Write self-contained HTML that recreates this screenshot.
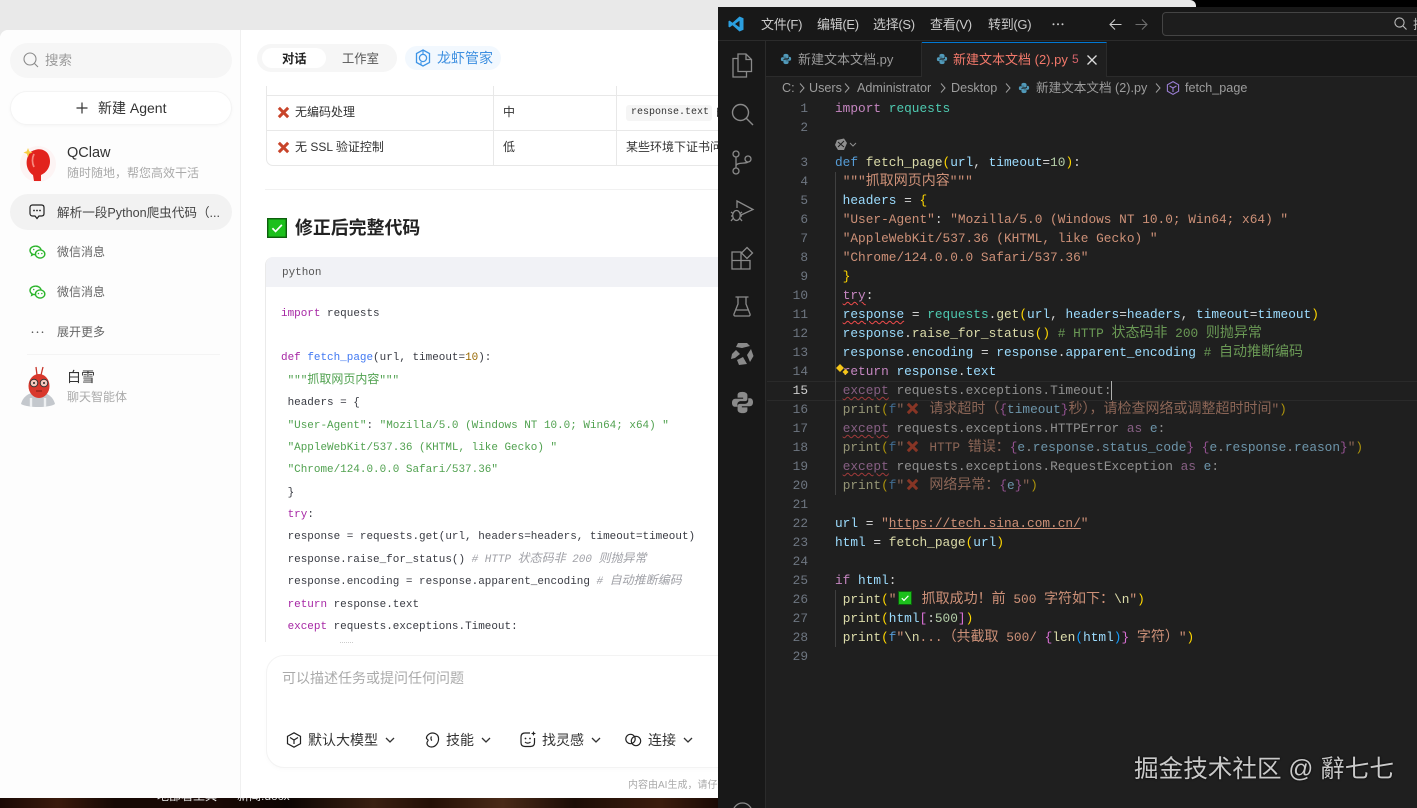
<!DOCTYPE html>
<html lang="zh"><head><meta charset="utf-8"><title>QClaw</title>
<style>
*{box-sizing:border-box;margin:0;padding:0}
html,body{width:1417px;height:808px;overflow:hidden;background:#000}
body{position:relative;font-family:"Liberation Sans","Noto Sans CJK SC",sans-serif}
.a{position:absolute;white-space:pre}
svg{position:absolute;overflow:visible}
i{font-style:normal}
.l{position:absolute;white-space:pre;height:19px;line-height:19px}
#ed .l{left:835px;font:12.8px/19px "Liberation Mono","Noto Sans CJK SC",monospace;color:#9cdcfe}
#ed i.c{font-size:14px;line-height:0;font-family:"Noto Sans CJK SC",sans-serif}
#ed .n{position:absolute;left:780px;width:28px;text-align:right;font:12.8px/19px "Liberation Mono",monospace;color:#6e7681}
.k{color:#c586c0}.t{color:#4ec9b0}.d{color:#569cd6}.f{color:#dcdcaa}.w{color:#d4d4d4}.s{color:#ce9178}.m{color:#b5cea8}.g{color:#6a9955}.y{color:#ffd700}.p{color:#da70d6}.b{color:#179fff}
.sq{text-decoration:underline wavy #f14c4c 1px;text-underline-offset:2px}
.dim{opacity:.62}
.dim .t{color:#d4d4d4}
#cd{position:absolute;left:0;top:1px}
#cd .l{left:281px;font:10.96px/22px "Liberation Mono","Noto Sans CJK SC",monospace;color:#383a42;height:22px}
#cd i.c{font-size:12px;line-height:0;font-family:"Noto Sans CJK SC",sans-serif}
.K{color:#a626a4}.F{color:#4078f2}.S{color:#50a14f}.N{color:#986801}.C,.C i{color:#a0a1a7;font-style:italic}
.e{display:inline-block;width:17.5px;height:12px;position:relative;vertical-align:-1px}
</style></head><body>
<svg width="0" height="0" style="position:absolute"><defs>
<symbol id="x" viewBox="0 0 14 14"><path d="M2 2L12 12M12 2L2 12" stroke="#c8442a" stroke-width="3.2" stroke-linecap="butt"/></symbol>
<symbol id="ok" viewBox="0 0 14 14"><rect x=".5" y=".5" width="13" height="13" fill="#1cc01c" stroke="#0d5f0d"/><path d="M3.8 7.2L6 9.4L10.4 4.8" stroke="#fff" stroke-width="1.2" fill="none"/></symbol>
<symbol id="py" viewBox="0 0 14 14"><path d="M7 1C4.5 1 4 2 4 3V4.5H7.3V5H2.6C1.5 5 1 6 1 7.3S1.6 9.5 2.6 9.5H4V8C4 7 5 6.3 6 6.3H8.6C9.4 6.3 10 5.7 10 5V3C10 1.8 8.8 1 7 1Z" fill="#519aba"/><path d="M7 13C9.5 13 10 12 10 11V9.5H6.7V9H11.4C12.5 9 13 8 13 6.7S12.4 4.5 11.4 4.5H10.5V6C10.5 7 9.5 7.7 8.5 7.7H5.6C4.8 7.7 4 8.3 4 9V11C4 12.2 5.2 13 7 13Z" fill="#519aba"/></symbol>
<symbol id="wx" viewBox="0 0 18 16"><path d="M7 1.2C3.7 1.2 1 3.2 1 5.8c0 1.5.9 2.7 2.2 3.6L2.8 11l1.9-1c.6.2 1.3.3 2 .3" fill="none" stroke="#2bb52b" stroke-width="1.5"/><path d="M12.9 5.3C12.4 3 10 1.2 7 1.2" fill="none" stroke="#2bb52b" stroke-width="1.5"/><ellipse cx="11.8" cy="9.6" rx="5" ry="4.3" fill="none" stroke="#2bb52b" stroke-width="1.5"/><circle cx="10" cy="9" r=".8" fill="#2bb52b"/><circle cx="13.6" cy="9" r=".8" fill="#2bb52b"/><circle cx="5" cy="4.8" r=".8" fill="#2bb52b"/></symbol>
<symbol id="chev" viewBox="0 0 10 6"><path d="M1 1L5 5L9 1" fill="none" stroke="#333" stroke-width="1.3"/></symbol>
</defs></svg>

<!-- backdrop -->
<div class="a" style="left:0;top:0;width:1196px;height:30px;background:#e9e9e9;border-top-right-radius:6px"></div>
<div class="a" style="left:0;top:30px;width:760px;height:778px;background:#e9e9e9"></div>
<div class="a" style="left:0;top:798px;width:718px;height:10px;background:linear-gradient(90deg,#1a0a06,#3a1a0c 8%,#160804 16%,#1a0905 30%,#0c0503 40%,#3a2012 52%,#241006 60%,#4a2a18 70%,#1c0d06 80%,#3b1c0d 92%,#1a0a05)"></div>
<div class="a" style="left:157px;top:789px;font-size:12px;line-height:15px;color:#eee">地部署工具</div>
<div class="a" style="left:237px;top:789px;font-size:12px;line-height:15px;color:#ddd">新闻.docx</div>

<!-- app window -->
<div class="a" style="left:0;top:30px;width:730px;height:768px;background:#fff;border-top-left-radius:8px;overflow:hidden"></div>
<div class="a" style="left:0;top:30px;width:241px;height:768px;background:#fdfdfd;border-right:1px solid #f0f0f0;border-top-left-radius:8px"></div>

<!-- sidebar -->
<div class="a" style="left:10px;top:43px;width:222px;height:35px;border-radius:18px;background:#f6f6f6"></div>
<svg style="left:23px;top:52px" width="16" height="16" viewBox="0 0 16 16"><circle cx="7" cy="7" r="6" fill="none" stroke="#8a8a8a" stroke-width="1.1"/><path d="M11.5 11.5L15 15" stroke="#8a8a8a" stroke-width="1.1"/></svg>
<div class="a" style="left:45px;top:51px;font-size:13.5px;line-height:20px;color:#9a9a9a">搜索</div>
<div class="a" style="left:10px;top:91px;width:222px;height:34px;border-radius:17px;background:#fff;border:1px solid #f4f4f4;box-shadow:0 1px 3px rgba(0,0,0,.03)"></div>
<svg style="left:76px;top:102px" width="12" height="12" viewBox="0 0 12 12"><path d="M6 .5V11.5M.5 6H11.5" stroke="#333" stroke-width="1.2"/></svg>
<div class="a" style="left:98px;top:98px;font-size:14px;line-height:20px;color:#333">新建 Agent</div>

<svg style="left:20px;top:142px" width="36" height="44" viewBox="0 0 36 44"><circle cx="18" cy="22" r="18" fill="#fdeeee" opacity=".6"/><path d="M8 14C5 21 7 29 13 33L14 39H21L21 33C28 30 32 22 29 14C27 8 20 6 15 8C11 9 9 11 8 14Z" fill="#e2231d"/><path d="M14 12C12 16 12 21 14 25" stroke="#f58a80" stroke-width="1.8" fill="none"/><path d="M8 6L9.2 9.3L12.5 10.5L9.2 11.7L8 15L6.8 11.7L3.5 10.5L6.8 9.3Z" fill="#f6cf45"/></svg>
<div class="a" style="left:67px;top:143px;font-size:14.5px;line-height:20px;color:#333">QClaw</div>
<div class="a" style="left:67px;top:165px;font-size:12px;line-height:17px;color:#aaa">随时随地，帮您高效干活</div>

<div class="a" style="left:10px;top:194px;width:222px;height:36px;border-radius:18px;background:#f2f2f2"></div>
<svg style="left:29px;top:204px" width="16" height="16" viewBox="0 0 16 16"><path d="M3.5 1H12.5C14 1 15 2 15 3.5V9.5C15 11 14 12 12.5 12H10L8 14.5L6 12H3.5C2 12 1 11 1 9.5V3.5C1 2 2 1 3.5 1Z" fill="none" stroke="#222" stroke-width="1.2"/><circle cx="5" cy="6.5" r=".9" fill="#222"/><circle cx="8" cy="6.5" r=".9" fill="#222"/><circle cx="11" cy="6.5" r=".9" fill="#222"/></svg>
<div class="a" style="left:57px;top:204px;font-size:12.6px;line-height:18px;color:#444">解析一段Python爬虫代码（...</div>

<svg style="left:29px;top:245px" width="17" height="15"><use href="#wx"/></svg>
<div class="a" style="left:57px;top:244px;font-size:12px;line-height:17px;color:#666">微信消息</div>
<svg style="left:29px;top:285px" width="17" height="15"><use href="#wx"/></svg>
<div class="a" style="left:57px;top:284px;font-size:12px;line-height:17px;color:#666">微信消息</div>
<svg style="left:31px;top:331px" width="13" height="3"><circle cx="1.5" cy="1.2" r=".8" fill="#555"/><circle cx="6.5" cy="1.2" r=".8" fill="#555"/><circle cx="11.5" cy="1.2" r=".8" fill="#555"/></svg>
<div class="a" style="left:57px;top:324px;font-size:12px;line-height:17px;color:#666">展开更多</div>
<div class="a" style="left:27px;top:354px;width:193px;height:1px;background:#f4f4f4"></div>

<svg style="left:20px;top:366px" width="36" height="42" viewBox="0 0 36 42"><path d="M1 38C3 30 10 26 18 26S33 30 35 38C29 42 8 42 1 38Z" fill="#c4c8cd"/><path d="M11 32V41M25 32V41" stroke="#eef0f2" stroke-width="2.4"/><ellipse cx="19" cy="20" rx="10.5" ry="12" fill="#d9382c"/><path d="M17 9L16 1M21 9L23 1" stroke="#c8352a" stroke-width="1.3"/><circle cx="14" cy="17" r="3.8" fill="#f3c9bc" stroke="#333"/><circle cx="24" cy="17" r="3.8" fill="#f3c9bc" stroke="#333"/><circle cx="14" cy="17" r="1" fill="#222"/><circle cx="24" cy="17" r="1" fill="#222"/><path d="M16 25H22" stroke="#7a1c14"/></svg>
<div class="a" style="left:67px;top:367px;font-size:14px;line-height:20px;color:#333">白雪</div>
<div class="a" style="left:67px;top:389px;font-size:12px;line-height:17px;color:#aaa">聊天智能体</div>

<!-- tabs -->
<div class="a" style="left:257px;top:44px;width:140px;height:28px;border-radius:14px;background:#f6f6f6"></div>
<div class="a" style="left:262px;top:48px;width:64px;height:20px;border-radius:10px;background:#fff"></div>
<div class="a" style="left:282px;top:50px;font-size:12.3px;line-height:18px;font-weight:700;color:#222">对话</div>
<div class="a" style="left:342px;top:50px;font-size:12.3px;line-height:18px;color:#555">工作室</div>
<div class="a" style="left:405px;top:46px;width:96px;height:24px;border-radius:12px;background:#f2f8fe"></div>
<svg style="left:414px;top:49px" width="18" height="18" viewBox="0 0 18 18"><path d="M9 1L15.5 4.5V13.5L9 17L2.5 13.5V4.5Z" fill="none" stroke="#3d94e6" stroke-width="1.3"/><circle cx="9" cy="9" r="3.6" fill="none" stroke="#3d94e6" stroke-width="1.3"/><path d="M9 5.4V1.5M7 13V16" stroke="#3d94e6" stroke-width="1.1"/></svg>
<div class="a" style="left:437px;top:48px;font-size:14px;line-height:20px;color:#3d8fe0">龙虾管家</div>

<!-- table -->
<div class="a" style="left:266px;top:86px;width:460px;height:80px;border:1px solid #e8e8e8;border-top:0;border-right:0;border-bottom-left-radius:7px"></div>
<div class="a" style="left:266px;top:95px;width:460px;height:1px;background:#e8e8e8"></div>
<div class="a" style="left:266px;top:130px;width:460px;height:1px;background:#e8e8e8"></div>
<div class="a" style="left:493px;top:86px;width:1px;height:80px;background:#e8e8e8"></div>
<div class="a" style="left:616px;top:86px;width:1px;height:80px;background:#e8e8e8"></div>
<svg style="left:277px;top:106px" width="13" height="13"><use href="#x"/></svg>
<div class="a" style="left:295px;top:104px;font-size:12px;line-height:17px;color:#333">无编码处理</div>
<svg style="left:277px;top:141px" width="13" height="13"><use href="#x"/></svg>
<div class="a" style="left:295px;top:139px;font-size:12px;line-height:17px;color:#333">无 SSL 验证控制</div>
<div class="a" style="left:503px;top:104px;font-size:12px;line-height:17px;color:#333">中</div>
<div class="a" style="left:503px;top:139px;font-size:12px;line-height:17px;color:#333">低</div>
<div class="a" style="left:626px;top:105px;width:86px;height:16px;background:#f5f5f5;border-radius:3px"></div>
<div class="a" style="left:631px;top:105px;font:10px/16px 'Liberation Mono',monospace;color:#333">response.text</div>
<div class="a" style="left:716px;top:104px;font-size:12px;line-height:17px;color:#333">的</div>
<div class="a" style="left:626px;top:139px;font-size:12px;line-height:17px;color:#333">某些环境下证书问题</div>
<div class="a" style="left:265px;top:189px;width:460px;height:1px;background:#f1f1f1"></div>

<svg style="left:267px;top:218px" width="20" height="20"><use href="#ok"/></svg>
<div class="a" style="left:295px;top:216px;font-size:17.9px;line-height:24px;font-weight:700;color:#222">修正后完整代码</div>

<!-- code block -->
<div class="a" style="left:265px;top:257px;width:470px;height:385px;border-left:1px solid #eaeaea;border-top-left-radius:8px;overflow:hidden"><div style="height:30px;background:#f1f2f6"></div></div>
<div class="a" style="left:282px;top:265px;font:10.96px/16px 'Liberation Mono',monospace;color:#555">python</div>
<div id="cd">
<div class="l" style="top:302px"><i class="K">import</i> requests</div>
<div class="l" style="top:346px"><i class="K">def</i> <i class="F">fetch_page</i>(url, timeout=<i class="N">10</i>):</div>
<div class="l" style="top:369px"> <i class="S">"""<i class="c">抓取网页内容</i>"""</i></div>
<div class="l" style="top:391px"> headers = {</div>
<div class="l" style="top:414px"> <i class="S">"User-Agent"</i>: <i class="S">"Mozilla/5.0 (Windows NT 10.0; Win64; x64) "</i></div>
<div class="l" style="top:436px"> <i class="S">"AppleWebKit/537.36 (KHTML, like Gecko) "</i></div>
<div class="l" style="top:458px"> <i class="S">"Chrome/124.0.0.0 Safari/537.36"</i></div>
<div class="l" style="top:481px"> }</div>
<div class="l" style="top:503px"> <i class="K">try</i>:</div>
<div class="l" style="top:525px"> response = requests.get(url, headers=headers, timeout=timeout)</div>
<div class="l" style="top:548px"> response.raise_for_status() <i class="C"># HTTP <i class="c">状态码非</i> 200 <i class="c">则抛异常</i></i></div>
<div class="l" style="top:570px"> response.encoding = response.apparent_encoding <i class="C"># <i class="c">自动推断编码</i></i></div>
<div class="l" style="top:593px"> <i class="K">return</i> response.text</div>
<div class="l" style="top:615px"> <i class="K">except</i> requests.exceptions.Timeout:</div>
</div>
<div class="a" style="left:340px;top:642px;width:13px;height:2px;border-top:1px dotted #ccc"></div>

<!-- input -->
<div class="a" style="left:266px;top:655px;width:470px;height:113px;border:1px solid #f3f3f3;border-radius:18px;background:#fff;box-shadow:0 2px 5px rgba(0,0,0,.02)"></div>
<div class="a" style="left:282px;top:668px;font-size:14px;line-height:20px;color:#aaa">可以描述任务或提问任何问题</div>
<svg style="left:286px;top:732px" width="16" height="16" viewBox="0 0 16 16"><path d="M8 .8L14.5 4.4V11.6L8 15.2L1.5 11.6V4.4Z" fill="none" stroke="#222" stroke-width="1.2"/><path d="M4 5.5L8 8L12 5.5M8 8V12" fill="none" stroke="#222" stroke-width="1.2"/></svg>
<div class="a" style="left:308px;top:730px;font-size:14px;line-height:20px;color:#333">默认大模型</div>
<svg style="left:385px;top:737px" width="10" height="6"><use href="#chev"/></svg>
<svg style="left:425px;top:732px" width="15" height="16" viewBox="0 0 15 16"><path d="M5 1.5C8 .3 13 1.5 13.5 6C14 10 11 15 6.5 15C3 15 1 12 2.5 9.5C4 8 2.5 7.5 1.5 6.5C1 4.5 3 2.5 5 1.5Z" fill="none" stroke="#222" stroke-width="1.2"/><path d="M6.5 4.5C5.5 6 6 8 7 8.5" fill="none" stroke="#222" stroke-width="1.2"/></svg>
<div class="a" style="left:446px;top:730px;font-size:14px;line-height:20px;color:#333">技能</div>
<svg style="left:481px;top:737px" width="10" height="6"><use href="#chev"/></svg>
<svg style="left:520px;top:731px" width="16" height="17" viewBox="0 0 16 17"><path d="M10 2H5C2.5 2 1 3.5 1 6V11.5C1 14 2.5 15.5 5 15.5H10.5C13 15.5 14.5 14 14.5 11.5V7" fill="none" stroke="#222" stroke-width="1.2"/><circle cx="5.5" cy="7.5" r=".9" fill="#222"/><circle cx="10" cy="7.5" r=".9" fill="#222"/><path d="M5 11C6.5 12.5 9 12.5 10.5 11" fill="none" stroke="#222" stroke-width="1.2"/><path d="M13.5 0L14.2 1.8L16 2.5L14.2 3.2L13.5 5L12.8 3.2L11 2.5L12.8 1.8Z" fill="#222"/></svg>
<div class="a" style="left:542px;top:730px;font-size:14px;line-height:20px;color:#333">找灵感</div>
<svg style="left:591px;top:737px" width="10" height="6"><use href="#chev"/></svg>
<svg style="left:625px;top:733px" width="17" height="14" viewBox="0 0 17 14"><circle cx="5.5" cy="6" r="4.7" fill="none" stroke="#222" stroke-width="1.2"/><circle cx="11" cy="8" r="4.7" fill="none" stroke="#222" stroke-width="1.2"/></svg>
<div class="a" style="left:648px;top:730px;font-size:14px;line-height:20px;color:#333">连接</div>
<svg style="left:683px;top:737px" width="10" height="6"><use href="#chev"/></svg>
<div class="a" style="left:628px;top:779px;font-size:10px;line-height:14px;color:#aaa">内容由AI生成，请仔细甄别</div>

<!-- VS Code -->
<div class="a" style="left:718px;top:7px;width:699px;height:801px;background:#1f1f1f;overflow:hidden;z-index:1"></div>
<div style="position:absolute;left:0;top:0;width:1417px;height:808px;z-index:2;overflow:hidden">
<div class="a" style="left:718px;top:7px;width:699px;height:34px;background:#181818;border-bottom:1px solid #2b2b2b"></div>
<div class="a" style="left:718px;top:41px;width:48px;height:767px;background:#181818;border-right:1px solid #2b2b2b"></div>
<div class="a" style="left:766px;top:41px;width:651px;height:36px;background:#181818;border-bottom:1px solid #2b2b2b"></div>

<svg style="left:728px;top:16px" width="16" height="16" viewBox="0 0 16 16"><path d="M11.5 0.5L15.5 2.3V13.7L11.5 15.5L4.5 9.2L1.6 11.4L.5 10.8V5.2L1.6 4.6L4.5 6.8ZM11.5 4.8L7 8L11.5 11.2Z" fill="#2b9fe0" fill-rule="evenodd"/></svg>
<div class="a" style="left:761px;top:15px;font-size:13px;line-height:19px;color:#ccc;letter-spacing:-.3px">文件(F)</div>
<div class="a" style="left:817px;top:15px;font-size:13px;line-height:19px;color:#ccc;letter-spacing:-.3px">编辑(E)</div>
<div class="a" style="left:873px;top:15px;font-size:13px;line-height:19px;color:#ccc;letter-spacing:-.3px">选择(S)</div>
<div class="a" style="left:930px;top:15px;font-size:13px;line-height:19px;color:#ccc;letter-spacing:-.3px">查看(V)</div>
<div class="a" style="left:988px;top:15px;font-size:13px;line-height:19px;color:#ccc;letter-spacing:-.3px">转到(G)</div>
<svg style="left:1052px;top:23px" width="12" height="3"><circle cx="1.5" cy="1.2" r="1" fill="#ccc"/><circle cx="6" cy="1.2" r="1" fill="#ccc"/><circle cx="10.5" cy="1.2" r="1" fill="#ccc"/></svg>
<svg style="left:1109px;top:18px" width="13" height="13" viewBox="0 0 13 13"><path d="M12.5 6.5H1M6 1.5L1 6.5L6 11.5" fill="none" stroke="#ccc" stroke-width="1.1"/></svg>
<svg style="left:1135px;top:18px" width="13" height="13" viewBox="0 0 13 13"><path d="M.5 6.5H12M7 1.5L12 6.5L7 11.5" fill="none" stroke="#6e6e6e" stroke-width="1.1"/></svg>
<div class="a" style="left:1162px;top:12px;width:270px;height:24px;border:1px solid #444;border-radius:4px;background:#1d1d1d"></div>
<svg style="left:1394px;top:17px" width="13" height="13" viewBox="0 0 13 13"><circle cx="5.5" cy="5.5" r="4.6" fill="none" stroke="#bbb" stroke-width="1.1"/><path d="M9 9L12.5 12.5" stroke="#bbb" stroke-width="1.1"/></svg>
<div class="a" style="left:1413px;top:15px;font-size:13px;line-height:19px;color:#bbb">搜索</div>

<!-- activity -->
<svg style="left:731px;top:53px" width="22" height="25" viewBox="0 0 22 25" fill="none" stroke="#8a8a8a" stroke-width="1.3"><path d="M7 1H15L20.5 6.5V18.5H7Z"/><path d="M15 1V6.5H20.5"/><path d="M7 5.5H2V24H15.5V18.5"/></svg>
<svg style="left:731px;top:103px" width="23" height="23" viewBox="0 0 23 23" fill="none" stroke="#8a8a8a" stroke-width="1.4"><circle cx="9.5" cy="9.5" r="8"/><path d="M15 15L22 22"/></svg>
<svg style="left:732px;top:150px" width="20" height="25" viewBox="0 0 20 25" fill="none" stroke="#8a8a8a" stroke-width="1.3"><circle cx="4" cy="4" r="3"/><circle cx="4" cy="21" r="3"/><circle cx="16" cy="9" r="3"/><path d="M4 7V18M4 16C4 12 14 14 16 12"/></svg>
<svg style="left:730px;top:200px" width="24" height="23" viewBox="0 0 24 23" fill="none" stroke="#8a8a8a" stroke-width="1.3"><path d="M7 8V1L23 9.5L11 15"/><ellipse cx="6.5" cy="15.5" rx="3.8" ry="5"/><path d="M1 12L3 13.5M1 16H3M1 21L3 18.5M12 12L10 13.5M12 16H10M12 21L10 18.5"/></svg>
<svg style="left:731px;top:247px" width="22" height="23" viewBox="0 0 22 23" fill="none" stroke="#8a8a8a" stroke-width="1.3"><path d="M1 5H10V22H1ZM1 13.5H19V22H10"/><path d="M16 .5L21.5 6L16 11.5L10.5 6Z"/></svg>
<svg style="left:733px;top:296px" width="18" height="21" viewBox="0 0 18 21" fill="none" stroke="#8a8a8a" stroke-width="1.3"><path d="M2.5 1H15.5M5 1V8L1 18C.6 19 1.2 20 2.2 20H15.8C16.8 20 17.4 19 17 18L13 8V1M3 14H15"/></svg>
<svg style="left:730px;top:342px" width="24" height="24" viewBox="0 0 24 24" fill="#8a8a8a"><path d="M8 1H17L20 4L12 6L6 5ZM21 7L23.5 14L20 20L17 13ZM6 8L2 12L1 17L5 16L10 12ZM7 18L13 15L17 22L9 23Z"/></svg>
<svg style="left:731px;top:391px" width="23" height="23" viewBox="0 0 14 14" fill="#8a8a8a"><path d="M7 .5C4.5 .5 4 1.5 4 2.5V4H7.4V4.7H2.6C1.4 4.7.6 5.6.6 7.2S1.4 9.6 2.6 9.6H3.9V8C3.9 7 4.9 6.2 5.9 6.2H8.6C9.5 6.2 10 5.6 10 4.8V2.5C10 1.4 8.8.5 7 .5Z"/><path d="M7 13.5C9.5 13.5 10 12.5 10 11.5V10H6.6V9.3H11.4C12.6 9.3 13.4 8.4 13.4 6.8S12.6 4.4 11.4 4.4H10.5V6C10.5 7 9.5 7.8 8.5 7.8H5.5C4.6 7.8 4 8.4 4 9.2V11.5C4 12.6 5.2 13.5 7 13.5Z"/></svg>
<svg style="left:732px;top:802px" width="21" height="21" viewBox="0 0 21 21" fill="none" stroke="#8a8a8a" stroke-width="1.3"><circle cx="10.5" cy="10.5" r="9.5"/></svg>

<!-- editor tabs -->
<div class="a" style="left:766px;top:42px;width:156px;height:34px;background:#181818;border-right:1px solid #2b2b2b"></div>
<svg style="left:780px;top:53px" width="12" height="12"><use href="#py"/></svg>
<div class="a" style="left:798px;top:50px;font-size:13px;line-height:19px;color:#9a9a9a">新建文本文档.py</div>
<div class="a" style="left:922px;top:42px;width:185px;height:35px;background:#1f1f1f;border-top:1px solid #0078d4;border-right:1px solid #2b2b2b"></div>
<svg style="left:936px;top:53px" width="12" height="12"><use href="#py"/></svg>
<div class="a" style="left:953px;top:50px;font-size:13px;line-height:19px;color:#f2786a">新建文本文档 (2).py</div>
<div class="a" style="left:1072px;top:50px;font-size:12px;line-height:19px;color:#d4636a">5</div>
<svg style="left:1087px;top:55px" width="10" height="10" viewBox="0 0 10 10"><path d="M.5 .5L9.5 9.5M9.5 .5L.5 9.5" stroke="#ddd" stroke-width="1.3"/></svg>

<!-- breadcrumb -->
<div class="a" style="left:782px;top:79px;font-size:12.6px;line-height:18px;color:#9d9d9d">C:</div>
<div class="a" style="left:809px;top:79px;font-size:12.6px;line-height:18px;color:#9d9d9d">Users</div>
<div class="a" style="left:857px;top:79px;font-size:12.6px;line-height:18px;color:#9d9d9d">Administrator</div>
<div class="a" style="left:951px;top:79px;font-size:12.6px;line-height:18px;color:#9d9d9d">Desktop</div>
<svg style="left:1018px;top:82px" width="12" height="12"><use href="#py"/></svg>
<div class="a" style="left:1036px;top:79px;font-size:12.6px;line-height:18px;color:#9d9d9d">新建文本文档 (2).py</div>
<svg style="left:799px;top:83px" width="6" height="10" viewBox="0 0 6 10"><path d="M1 .5L5 5L1 9.5" fill="none" stroke="#9d9d9d"/></svg>
<svg style="left:844px;top:83px" width="6" height="10" viewBox="0 0 6 10"><path d="M1 .5L5 5L1 9.5" fill="none" stroke="#9d9d9d"/></svg>
<svg style="left:940px;top:83px" width="6" height="10" viewBox="0 0 6 10"><path d="M1 .5L5 5L1 9.5" fill="none" stroke="#9d9d9d"/></svg>
<svg style="left:1005px;top:83px" width="6" height="10" viewBox="0 0 6 10"><path d="M1 .5L5 5L1 9.5" fill="none" stroke="#9d9d9d"/></svg>
<svg style="left:1155px;top:83px" width="6" height="10" viewBox="0 0 6 10"><path d="M1 .5L5 5L1 9.5" fill="none" stroke="#9d9d9d"/></svg>
<svg style="left:1166px;top:81px" width="14" height="14" viewBox="0 0 14 14"><path d="M7 .6L12.6 3.8V10.2L7 13.4L1.4 10.2V3.8Z" fill="none" stroke="#9b7fd4" stroke-width="1.1"/><path d="M3.6 5L7 7L10.4 5M7 7V11" fill="none" stroke="#9b7fd4" stroke-width="1.1"/></svg>
<div class="a" style="left:1185px;top:79px;font-size:12.6px;line-height:18px;color:#9d9d9d">fetch_page</div>

<!-- editor -->
<div id="ed">
<div class="a" style="left:767px;top:381px;width:650px;height:20px;border-top:1px solid #2a2a2a;border-bottom:1px solid #2a2a2a"></div>
<div class="a" style="left:835px;top:172px;width:1px;height:323px;background:#404040"></div>
<div class="a" style="left:835px;top:590px;width:1px;height:57px;background:#404040"></div>

<div class="n" style="top:99px">1</div><div class="n" style="top:118px">2</div>
<div class="n" style="top:153px">3</div><div class="n" style="top:172px">4</div><div class="n" style="top:191px">5</div><div class="n" style="top:210px">6</div><div class="n" style="top:229px">7</div><div class="n" style="top:248px">8</div><div class="n" style="top:267px">9</div><div class="n" style="top:286px">10</div><div class="n" style="top:305px">11</div><div class="n" style="top:324px">12</div><div class="n" style="top:343px">13</div><div class="n" style="top:362px">14</div><div class="n" style="top:381px;color:#ccc">15</div><div class="n" style="top:400px">16</div><div class="n" style="top:419px">17</div><div class="n" style="top:438px">18</div><div class="n" style="top:457px">19</div><div class="n" style="top:476px">20</div><div class="n" style="top:495px">21</div><div class="n" style="top:514px">22</div><div class="n" style="top:533px">23</div><div class="n" style="top:552px">24</div><div class="n" style="top:571px">25</div><div class="n" style="top:590px">26</div><div class="n" style="top:609px">27</div><div class="n" style="top:628px">28</div><div class="n" style="top:647px">29</div>

<svg style="left:835px;top:138px" width="22" height="13" viewBox="0 0 22 13"><path d="M2 2L9 .5L12 5L9 12L3 12L0 7Z" fill="#8f8f8f"/><path d="M3 4L9 9M9 3L3 9" stroke="#1f1f1f"/><path d="M15 5L18 8L21 5" fill="none" stroke="#8f8f8f"/></svg>

<div class="l" style="top:99px"><i class="k">import</i> <i class="t">requests</i></div>
<div class="l" style="top:153px"><i class="d">def</i> <i class="f">fetch_page</i><i class="y">(</i>url<i class="w">,</i> timeout<i class="w">=</i><i class="m">10</i><i class="y">)</i><i class="w">:</i></div>
<div class="l" style="top:172px"> <i class="s">"""<i class="c">抓取网页内容</i>"""</i></div>
<div class="l" style="top:191px"> headers <i class="w">=</i> <i class="y">{</i></div>
<div class="l" style="top:210px"> <i class="s">"User-Agent"</i><i class="w">:</i> <i class="s">"Mozilla/5.0 (Windows NT 10.0; Win64; x64) "</i></div>
<div class="l" style="top:229px"> <i class="s">"AppleWebKit/537.36 (KHTML, like Gecko) "</i></div>
<div class="l" style="top:248px"> <i class="s">"Chrome/124.0.0.0 Safari/537.36"</i></div>
<div class="l" style="top:267px"> <i class="y">}</i></div>
<div class="l" style="top:286px"> <i class="k sq">try</i><i class="w">:</i></div>
<div class="l" style="top:305px"> <i class="sq">response</i> <i class="w">=</i> <i class="t">requests</i><i class="w">.</i><i class="f">get</i><i class="y">(</i>url<i class="w">,</i> headers<i class="w">=</i>headers<i class="w">,</i> timeout<i class="w">=</i>timeout<i class="y">)</i></div>
<div class="l" style="top:324px"> response<i class="w">.</i><i class="f">raise_for_status</i><i class="y">()</i> <i class="g"># HTTP <i class="c">状态码非</i> 200 <i class="c">则抛异常</i></i></div>
<div class="l" style="top:343px"> response<i class="w">.</i>encoding <i class="w">=</i> response<i class="w">.</i>apparent_encoding <i class="g"># <i class="c">自动推断编码</i></i></div>
<div class="l" style="top:362px"> <i class="k">return</i> response<i class="w">.</i>text</div>
<svg style="left:836px;top:364px" width="13" height="12" viewBox="0 0 13 12"><path d="M4 0L8 4L4 8L0 4Z" fill="#f5c518"/><path d="M9.5 5L12.5 8L9.5 11L6.5 8Z" fill="#f5c518"/></svg>
<div class="l dim" style="top:381px"> <i class="k sq">except</i> <i class="t">requests</i><i class="w">.</i><i class="t">exceptions</i><i class="w">.</i><i class="t">Timeout</i><i class="w">:</i></div>
<div class="a" style="left:1111px;top:381px;width:1px;height:19px;background:#aeafad"></div>
<div class="l dim" style="top:400px"> <i class="f">print</i><i class="y">(</i><i class="d">f</i><i class="s">"<span class="e"><svg style="left:2px;top:0" width="13" height="13"><use href="#x"/></svg></span> <i class="c">请求超时（</i></i><i class="p">{</i>timeout<i class="p">}</i><i class="s"><i class="c">秒），请检查网络或调整超时时间</i>"</i><i class="y">)</i></div>
<div class="l dim" style="top:419px"> <i class="k sq">except</i> <i class="t">requests</i><i class="w">.</i><i class="t">exceptions</i><i class="w">.</i><i class="t">HTTPError</i> <i class="k">as</i> e<i class="w">:</i></div>
<div class="l dim" style="top:438px"> <i class="f">print</i><i class="y">(</i><i class="d">f</i><i class="s">"<span class="e"><svg style="left:2px;top:0" width="13" height="13"><use href="#x"/></svg></span> HTTP <i class="c">错误：</i></i><i class="p">{</i>e<i class="w">.</i>response<i class="w">.</i>status_code<i class="p">}</i> <i class="p">{</i>e<i class="w">.</i>response<i class="w">.</i>reason<i class="p">}</i><i class="s">"</i><i class="y">)</i></div>
<div class="l dim" style="top:457px"> <i class="k sq">except</i> <i class="t">requests</i><i class="w">.</i><i class="t">exceptions</i><i class="w">.</i><i class="t">RequestException</i> <i class="k">as</i> e<i class="w">:</i></div>
<div class="l dim" style="top:476px"> <i class="f">print</i><i class="y">(</i><i class="d">f</i><i class="s">"<span class="e"><svg style="left:2px;top:0" width="13" height="13"><use href="#x"/></svg></span> <i class="c">网络异常：</i></i><i class="p">{</i>e<i class="p">}</i><i class="s">"</i><i class="y">)</i></div>
<div class="l" style="top:514px">url <i class="w">=</i> <i class="s">"<u>https://tech.sina.com.cn/</u>"</i></div>
<div class="l" style="top:533px">html <i class="w">=</i> <i class="f">fetch_page</i><i class="y">(</i>url<i class="y">)</i></div>
<div class="l" style="top:571px"><i class="k">if</i> html<i class="w">:</i></div>
<div class="l" style="top:590px"> <i class="f">print</i><i class="y">(</i><i class="s">"<span class="e"><svg style="left:2px;top:-1px" width="14" height="14"><use href="#ok"/></svg></span> <i class="c">抓取成功！前</i> 500 <i class="c">字符如下：</i></i><i class="f">\n</i><i class="s">"</i><i class="y">)</i></div>
<div class="l" style="top:609px"> <i class="f">print</i><i class="y">(</i>html<i class="p">[</i><i class="w">:</i><i class="m">500</i><i class="p">]</i><i class="y">)</i></div>
<div class="l" style="top:628px"> <i class="f">print</i><i class="y">(</i><i class="d">f</i><i class="s">"<i class="f">\n</i>...<i class="c">（共截取</i> 500/ </i><i class="p">{</i><i class="f">len</i><i class="b">(</i>html<i class="b">)</i><i class="p">}</i> <i class="s"><i class="c">字符）</i>"</i><i class="y">)</i></div>
</div>

<div class="a" style="left:1134px;top:754px;font-size:24.6px;line-height:32px;color:#c9c9c9;text-shadow:0 0 2px #000;font-family:'Liberation Sans','Noto Sans CJK TC',sans-serif">掘金技术社区 @ 辭七七</div>
</div>
</body></html>
